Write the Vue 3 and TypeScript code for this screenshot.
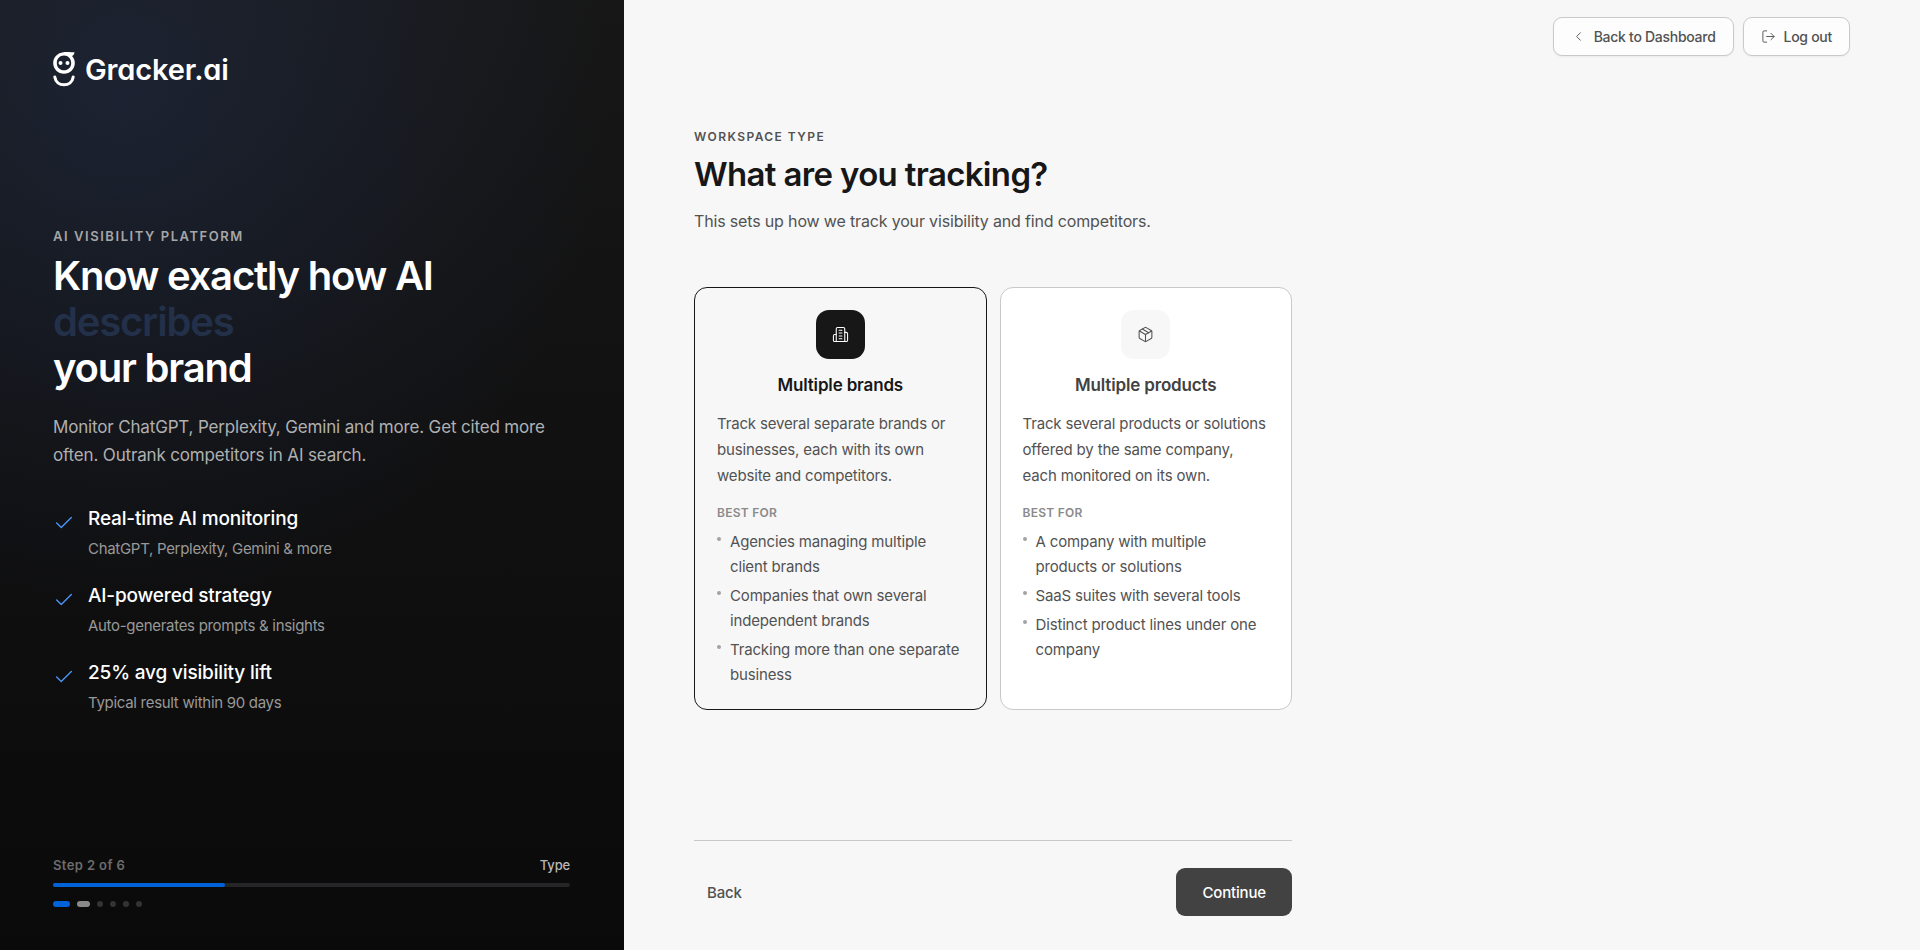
<script setup lang="ts">
import { ref } from 'vue'

interface Feature {
  title: string
  detail: string
}

interface WorkspaceType {
  id: string
  title: string
  description: string
  bestFor: string[]
  icon: string[]
}

const features: Feature[] = [
  { title: 'Real-time AI monitoring', detail: 'ChatGPT, Perplexity, Gemini & more' },
  { title: 'AI-powered strategy', detail: 'Auto-generates prompts & insights' },
  { title: '25% avg visibility lift', detail: 'Typical result within 90 days' },
]

const types: WorkspaceType[] = [
  {
    id: 'brands',
    title: 'Multiple brands',
    description: 'Track several separate brands or businesses, each with its own website and competitors.',
    bestFor: [
      'Agencies managing multiple client brands',
      'Companies that own several independent brands',
      'Tracking more than one separate business',
    ],
    icon: [
      'M6 22V4a2 2 0 0 1 2-2h8a2 2 0 0 1 2 2v18Z',
      'M6 12H4a2 2 0 0 0-2 2v6a2 2 0 0 0 2 2h2',
      'M18 9h2a2 2 0 0 1 2 2v9a2 2 0 0 1-2 2h-2',
      'M10 6h4',
      'M10 10h4',
      'M10 14h4',
      'M10 18h4',
    ],
  },
  {
    id: 'products',
    title: 'Multiple products',
    description: 'Track several products or solutions offered by the same company, each monitored on its own.',
    bestFor: [
      'A company with multiple products or solutions',
      'SaaS suites with several tools',
      'Distinct product lines under one company',
    ],
    icon: [
      'M11 21.73a2 2 0 0 0 2 0l7-4A2 2 0 0 0 21 16V8a2 2 0 0 0-1-1.73l-7-4a2 2 0 0 0-2 0l-7 4A2 2 0 0 0 3 8v8a2 2 0 0 0 1 1.73z',
      'M12 22V12',
      'M3.29 7 12 12l8.71-5',
      'm7.5 4.27 9 5.15',
    ],
  },
]

const selected = ref('brands')
const step = 2
const totalSteps = 6
const progress = `${(step / totalSteps) * 100}%`

function dotState(n: number): string {
  if (n < step) return 'done'
  return n === step ? 'current' : 'todo'
}
</script>

<template>
  <div class="page">
    <aside class="side">
      <div class="logo">
        <svg class="logo-mark" viewBox="0 0 22 35" aria-hidden="true">
          <path
            d="M21.5 0.2 C17 0.6 14.5 -0.2 10.5 0.2 C4.5 0.8 0.2 5.2 0.2 11 C0.2 17 5 21.8 11 21.8 C17 21.8 21.8 17 21.8 11 C21.8 8.3 20.8 5.8 19 4 C20.5 3.3 21.4 1.8 21.5 0.2 Z M11 3.6 C15.2 3.6 18.2 6.8 18.2 11 C18.2 15.2 15.2 18.3 11 18.3 C6.8 18.3 3.8 15.2 3.8 11 C3.8 6.8 6.8 3.6 11 3.6 Z"
            fill="currentColor"
            fill-rule="evenodd"
          />
          <circle cx="7.5" cy="11" r="2" fill="currentColor" />
          <circle cx="14.5" cy="11" r="2" fill="currentColor" />
          <path class="smile" d="M1.8 25 C2.6 30 6.3 32.8 11 32.8 C15.7 32.8 19.4 30 20.2 25" />
        </svg>
        <span class="logo-text">Gracker.ai</span>
      </div>

      <section class="pitch">
        <p class="side-eyebrow">AI VISIBILITY PLATFORM</p>
        <h2 class="headline">Know exactly how AI <span class="accent">describes</span> your brand</h2>
        <p class="lead">Monitor ChatGPT, Perplexity, Gemini and more. Get cited more often. Outrank competitors in AI search.</p>
        <ul class="features">
          <li v-for="f in features" :key="f.title" class="feature">
            <svg class="check" viewBox="0 0 24 24" aria-hidden="true"><path d="M20 6 9 17l-5-5" /></svg>
            <div>
              <p class="feature-title">{{ f.title }}</p>
              <p class="feature-detail">{{ f.detail }}</p>
            </div>
          </li>
        </ul>
      </section>

      <footer class="steps">
        <div class="steps-row">
          <span class="steps-count">Step {{ step }} of {{ totalSteps }}</span>
          <span class="steps-name">Type</span>
        </div>
        <div class="track"><div class="fill" :style="{ width: progress }"></div></div>
        <div class="dots">
          <span v-for="n in totalSteps" :key="n" class="dot" :class="dotState(n)"></span>
        </div>
      </footer>
    </aside>

    <main class="main">
      <header class="topbar">
        <button type="button" class="top-btn">
          <svg class="top-icon" viewBox="0 0 24 24" aria-hidden="true"><path d="m15 18-6-6 6-6" /></svg>
          Back to Dashboard
        </button>
        <button type="button" class="top-btn">
          <svg class="top-icon" viewBox="0 0 24 24" aria-hidden="true">
            <path d="M9 21H5a2 2 0 0 1-2-2V5a2 2 0 0 1 2-2h4" />
            <path d="m16 17 5-5-5-5" />
            <path d="M21 12H9" />
          </svg>
          Log out
        </button>
      </header>

      <div class="content">
        <p class="eyebrow">WORKSPACE TYPE</p>
        <h1 class="title">What are you tracking?</h1>
        <p class="subtitle">This sets up how we track your visibility and find competitors.</p>

        <div class="cards">
          <button
            v-for="t in types"
            :key="t.id"
            type="button"
            class="card"
            :class="{ selected: selected === t.id }"
            :aria-pressed="selected === t.id"
            @click="selected = t.id"
          >
            <span class="card-icon">
              <svg viewBox="0 0 24 24" aria-hidden="true"><path v-for="d in t.icon" :key="d" :d="d" /></svg>
            </span>
            <span class="card-title">{{ t.title }}</span>
            <span class="card-text">{{ t.description }}</span>
            <span class="best-label">BEST FOR</span>
            <span class="best-list">
              <span v-for="b in t.bestFor" :key="b" class="best-item">{{ b }}</span>
            </span>
          </button>
        </div>

        <div class="actions">
          <button type="button" class="back">Back</button>
          <button type="button" class="continue">Continue</button>
        </div>
      </div>
    </main>
  </div>
</template>

<style>
body {
  margin: 0;
  background: #f7f7f7;
}
</style>

<style scoped>
.page {
  display: grid;
  grid-template-columns: 32.5% 1fr;
  min-height: 100vh;
  font-family: Inter, "Liberation Sans", sans-serif;
  letter-spacing: -0.01em;
  background: #f7f7f7;
}

.page * {
  box-sizing: border-box;
}

p,
h1,
h2,
ul {
  margin: 0;
  padding: 0;
}

button {
  font-family: inherit;
  letter-spacing: inherit;
  cursor: pointer;
}

svg {
  flex: none;
  fill: none;
  stroke: currentColor;
  stroke-width: 1.5;
  stroke-linecap: round;
  stroke-linejoin: round;
}

.side {
  display: flex;
  flex-direction: column;
  justify-content: space-between;
  padding: 52px 54px 43px 53px;
  color: #fff;
  background:
    radial-gradient(ellipse 78% 54% at 20% 10%, rgba(70, 120, 235, 0.13), transparent),
    linear-gradient(180deg, #171717, #0a0a0b);
}

.logo {
  display: flex;
  align-items: center;
  gap: 10px;
}

.logo-mark {
  width: 22px;
  height: 35px;
  stroke: none;
}

.smile {
  stroke: currentColor;
  stroke-width: 3;
}

.logo-text {
  font-size: 29px;
  font-weight: 600;
  line-height: 35px;
  font-feature-settings: "cv11";
}

.pitch {
  padding-bottom: 2px;
}

.side-eyebrow {
  font-size: 13px;
  font-weight: 600;
  line-height: 20px;
  letter-spacing: 0.12em;
  color: #a6a6a6;
}

.headline {
  margin-top: 7px;
  font-size: 40px;
  font-weight: 600;
  line-height: 46px;
  letter-spacing: -0.03em;
}

.accent {
  display: block;
  color: #233049;
}

.lead {
  margin-top: 22px;
  font-size: 17px;
  line-height: 28px;
  color: #b0b0b0;
}

.features {
  display: flex;
  flex-direction: column;
  gap: 22px;
  margin-top: 36px;
  list-style: none;
}

.feature {
  display: flex;
  gap: 13px;
}

.check {
  width: 22px;
  height: 22px;
  margin-top: 7px;
  color: #4d94f7;
}

.feature-title {
  font-size: 19px;
  font-weight: 500;
  line-height: 28px;
}

.feature-detail {
  margin-top: 4px;
  font-size: 15px;
  line-height: 23px;
  letter-spacing: -0.02em;
  color: #999;
}

.steps-row {
  display: flex;
  justify-content: space-between;
  font-size: 13px;
  font-weight: 500;
  line-height: 20px;
}

.steps-count {
  font-weight: 600;
  letter-spacing: 0.03em;
  color: #6b6b6b;
}

.steps-name {
  color: #b8b8b8;
}

.track {
  height: 4px;
  margin-top: 8px;
  border-radius: 2px;
  background: #252527;
}

.fill {
  height: 100%;
  border-radius: 2px;
  background: #0062d6;
}

.dots {
  display: flex;
  gap: 7px;
  margin-top: 14px;
}

.dot {
  width: 6px;
  height: 6px;
  border-radius: 3px;
  background: #333335;
}

.dot.done {
  width: 17px;
  background: #0062d6;
}

.dot.current {
  width: 13px;
  background: #8a8a8a;
}

.main {
  display: flex;
  flex-direction: column;
  padding: 17px 70px 34px;
}

.topbar {
  display: flex;
  justify-content: flex-end;
  gap: 9px;
}

.top-btn {
  display: flex;
  align-items: center;
  gap: 8px;
  height: 39px;
  padding: 0 17px;
  border: 1px solid #c9c9c9;
  border-radius: 9px;
  background: #fdfdfd;
  box-shadow: 0 1px 2px rgba(0, 0, 0, 0.05);
  font-size: 14px;
  font-weight: 500;
  letter-spacing: -0.02em;
  color: #525252;
}

.top-icon {
  width: 15px;
  height: 15px;
}

.content {
  flex: 1;
  display: flex;
  flex-direction: column;
  max-width: 598px;
  margin-top: 71px;
}

.eyebrow {
  font-size: 12px;
  font-weight: 600;
  line-height: 20px;
  letter-spacing: 0.12em;
  color: #525252;
}

.title {
  margin-top: 6px;
  font-size: 33px;
  font-weight: 600;
  line-height: 42px;
  letter-spacing: -0.02em;
  color: #171717;
}

.subtitle {
  margin-top: 13px;
  font-size: 16px;
  line-height: 26px;
  color: #525252;
}

.cards {
  display: grid;
  grid-template-columns: 1fr 1fr;
  gap: 13px;
  margin-top: 53px;
}

.card {
  display: flex;
  flex-direction: column;
  padding: 22px;
  border: 1px solid #c9c9c9;
  border-radius: 13px;
  background: #fff;
  text-align: left;
  color: #525252;
}

.card.selected {
  border-color: #171717;
  background: #f7f7f7;
}

.card-icon {
  display: flex;
  align-items: center;
  justify-content: center;
  align-self: center;
  width: 49px;
  height: 49px;
  border-radius: 13px;
  background: #f7f7f7;
}

.card-icon svg {
  width: 17px;
  height: 17px;
}

.selected .card-icon {
  background: #171717;
  color: #fff;
}

.card-title {
  align-self: center;
  margin-top: 14px;
  font-size: 17px;
  font-weight: 600;
  line-height: 24px;
  color: #424242;
}

.selected .card-title {
  color: #171717;
}

.card-text {
  margin-top: 14px;
  font-size: 15px;
  line-height: 26px;
}

.best-label {
  margin-top: 14px;
  font-size: 12px;
  font-weight: 600;
  line-height: 20px;
  letter-spacing: 0.02em;
  color: #8a8a8a;
}

.best-list {
  display: flex;
  flex-direction: column;
  gap: 4px;
  margin-top: 6px;
}

.best-item {
  display: flex;
  gap: 9px;
  font-size: 15px;
  line-height: 25px;
}

.best-item::before {
  content: "";
  flex: none;
  width: 4px;
  height: 4px;
  margin-top: 8px;
  border-radius: 50%;
  background: #a3a3a3;
}

.actions {
  display: flex;
  align-items: center;
  justify-content: space-between;
  margin-top: auto;
  padding-top: 27px;
  border-top: 1px solid #c9c9c9;
}

.back,
.continue {
  height: 48px;
  border: 0;
  border-radius: 9px;
  font-size: 15px;
  font-weight: 500;
}

.back {
  padding: 0 13px;
  background: transparent;
  color: #525252;
}

.continue {
  padding: 0 26px;
  background: #424242;
  color: #fff;
}
</style>
